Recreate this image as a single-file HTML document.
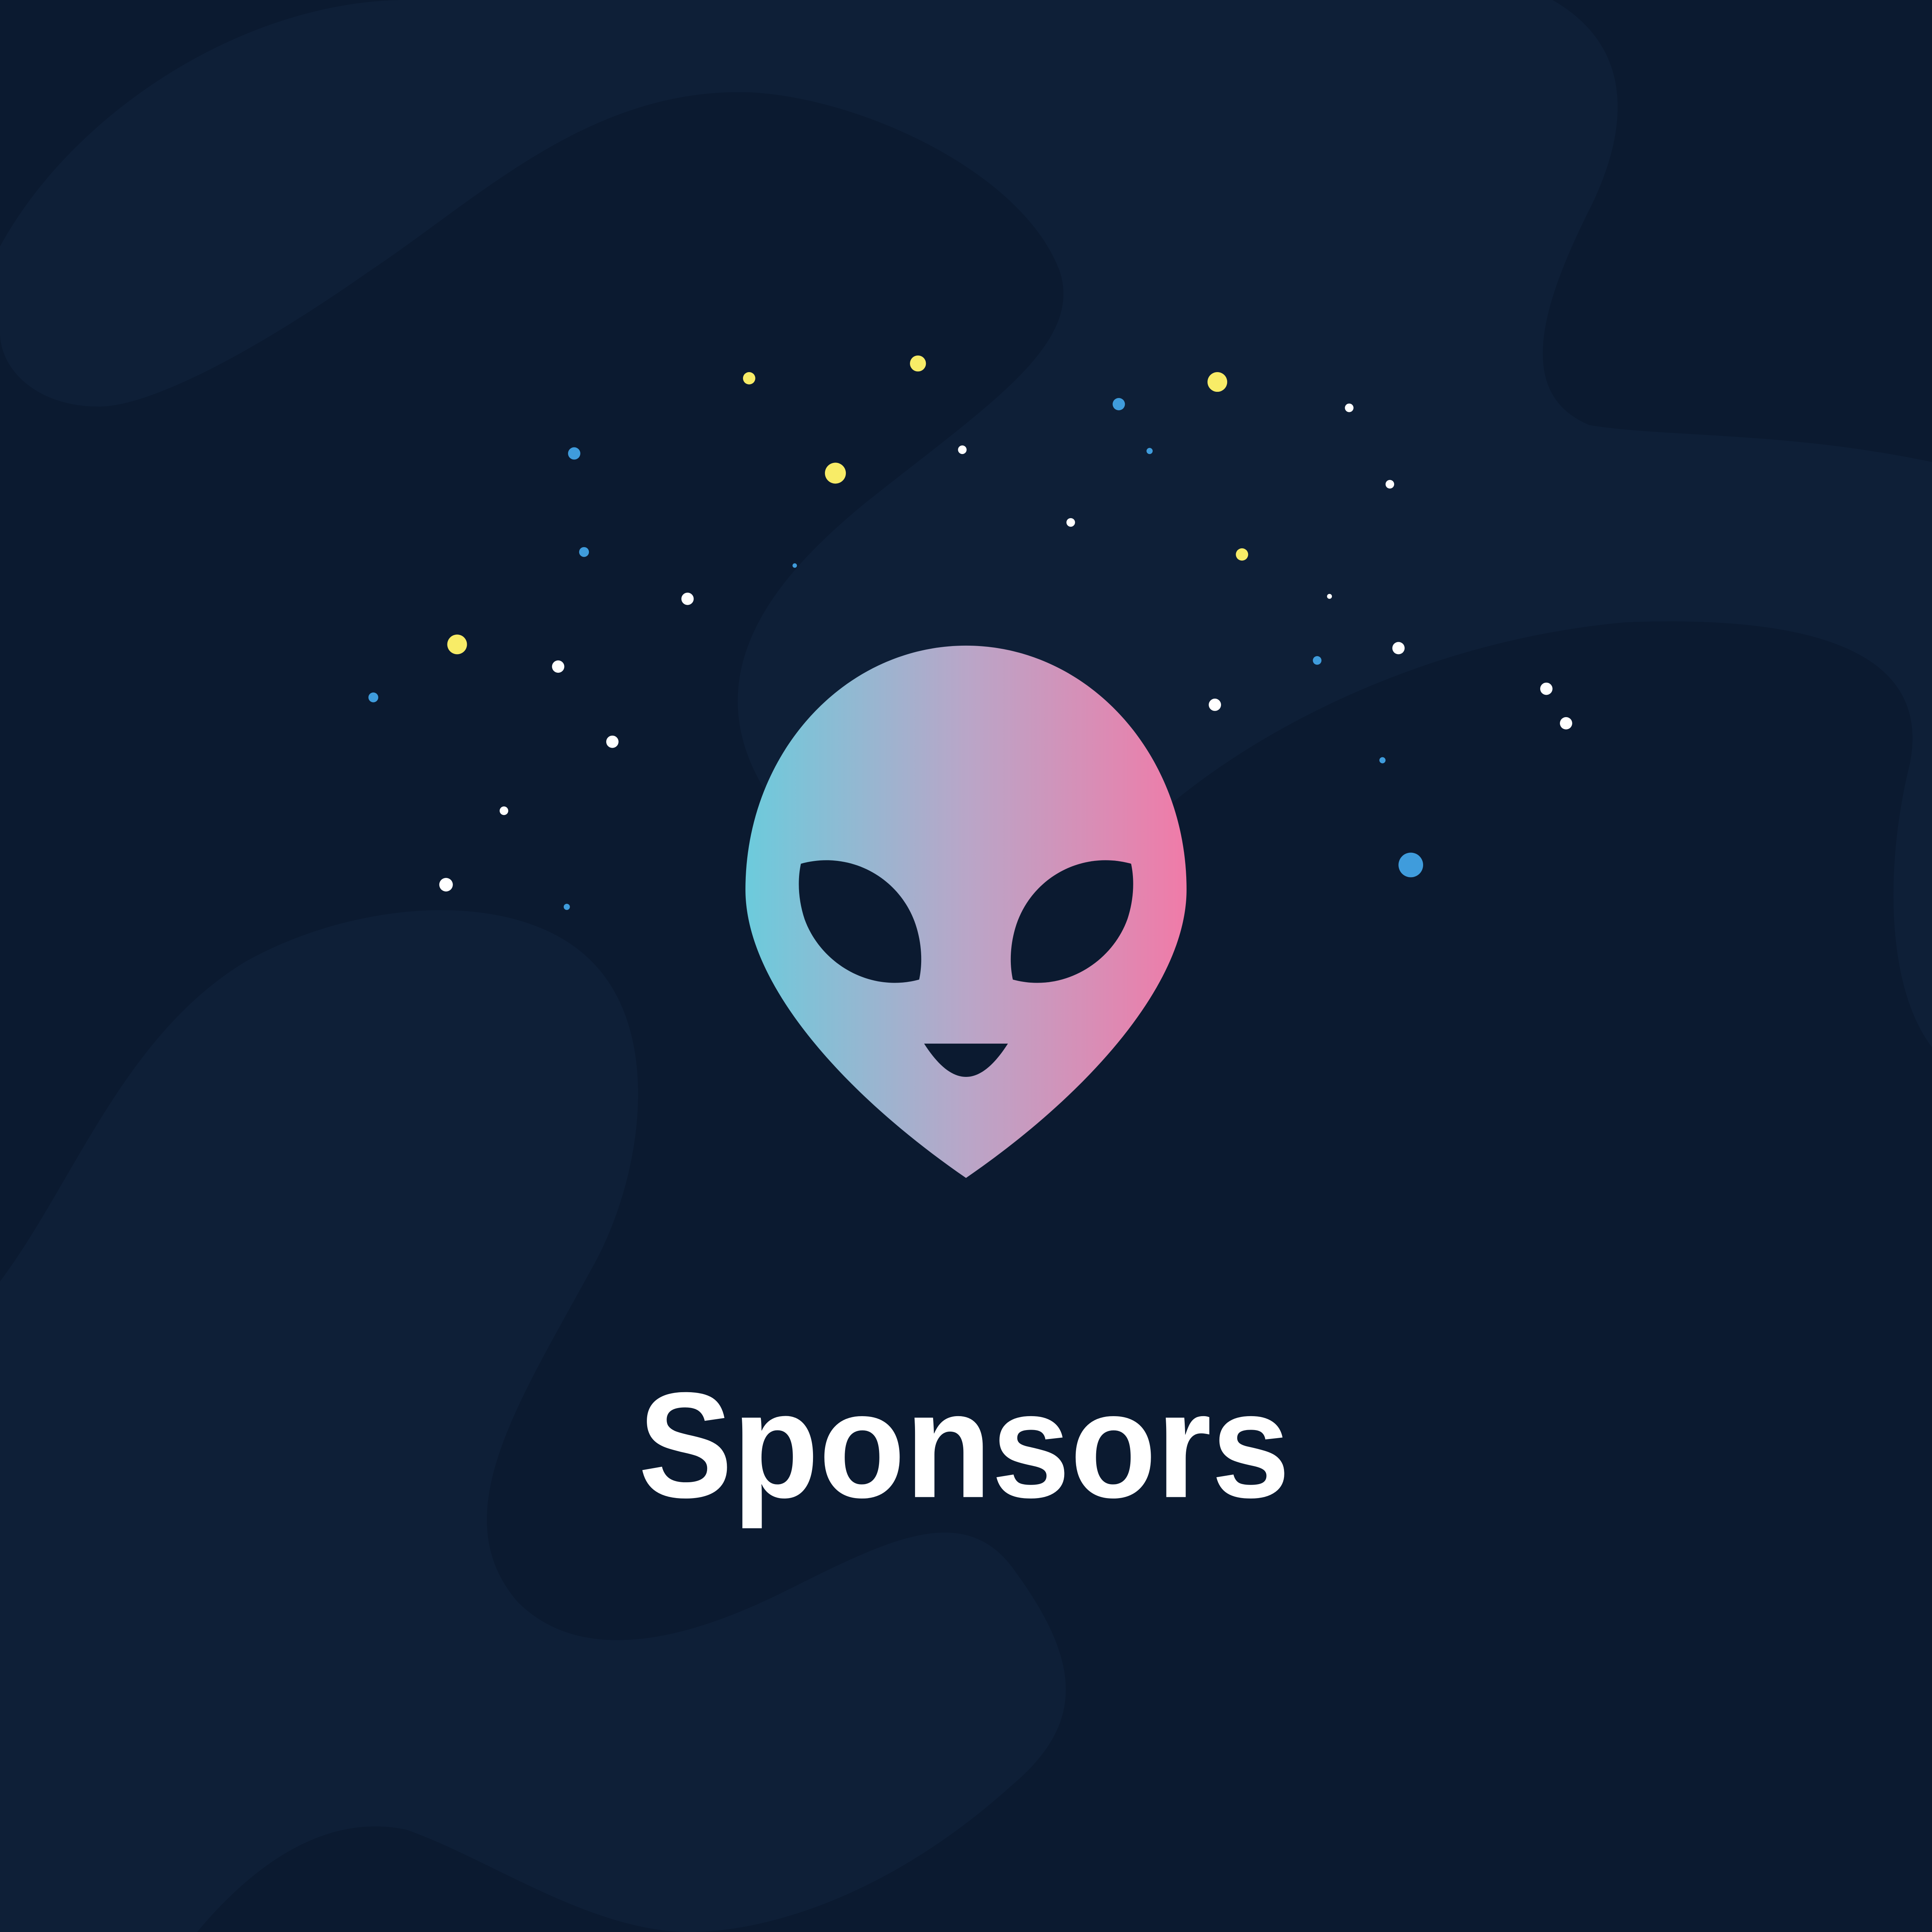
<!DOCTYPE html>
<html><head><meta charset="utf-8"><style>
html,body{margin:0;padding:0;background:#0b1a30;overflow:hidden;width:100%;height:100%;}
svg{display:block;position:fixed;left:0;top:0;width:100vw;height:100vh;}
</style></head><body>
<svg viewBox="0 0 1568 1568" preserveAspectRatio="none" xmlns="http://www.w3.org/2000/svg">
<defs>
<linearGradient id="g" x1="605" y1="0" x2="963" y2="0" gradientUnits="userSpaceOnUse">
<stop offset="0" stop-color="#6ccbdc"/><stop offset="0.5" stop-color="#b9a6c8"/><stop offset="1" stop-color="#f07ba8"/>
</linearGradient>
</defs>
<rect width="1568" height="1568" fill="#0b1a30"/>
<g fill="#0e1f37">
<path d="M0,200 C60,90 200,0 330,0 L1260,0 C1330,40 1320,110 1290,170 C1250,250 1230,320 1290,345 C1350,355 1450,350 1568,375 L1568,850 C1530,800 1530,700 1550,620 C1570,520 1450,500 1320,505 C1150,520 1000,600 920,680 C850,720 690,700 620,640 C560,540 640,460 700,410 C800,330 880,280 860,220 C830,140 700,80 610,75 C480,70 390,160 300,220 C200,290 120,330 80,330 C30,330 0,300 0,270 Z"/>
<path d="M0,1040 C60,960 100,840 200,780 C290,730 420,720 480,780 C540,840 520,960 480,1030 C420,1140 360,1230 420,1300 C480,1360 580,1320 640,1290 C720,1250 780,1220 820,1270 C880,1350 880,1400 820,1450 C720,1540 620,1568 560,1568 C480,1568 400,1510 330,1485 C260,1470 200,1520 160,1568 L0,1568 Z"/>
<path d="M560,0 C620,30 700,40 800,0 Z"/>
</g>
<g fill="#ffffff">
<circle cx="781" cy="365" r="3.5"/><circle cx="869" cy="424" r="3.5"/><circle cx="558" cy="486" r="5"/>
<circle cx="453" cy="541" r="5"/><circle cx="497" cy="602" r="5"/><circle cx="409" cy="658" r="3.5"/>
<circle cx="362" cy="718" r="5.5"/><circle cx="1095" cy="331" r="3.5"/><circle cx="1128" cy="393" r="3.5"/>
<circle cx="1079" cy="484" r="2"/><circle cx="1135" cy="526" r="5"/><circle cx="986" cy="572" r="5"/>
<circle cx="1255" cy="559" r="5"/><circle cx="1271" cy="587" r="5"/>
</g>
<g fill="#f8ec67">
<circle cx="608" cy="307" r="5"/><circle cx="745" cy="295" r="6.5"/><circle cx="678" cy="384" r="8.5"/>
<circle cx="988" cy="310" r="8"/><circle cx="1008" cy="450" r="5"/><circle cx="371" cy="523" r="8"/>
</g>
<g fill="#3f9cdc">
<circle cx="466" cy="368" r="5"/><circle cx="474" cy="448" r="4"/><circle cx="645" cy="459" r="1.8"/>
<circle cx="303" cy="566" r="4"/><circle cx="460" cy="736" r="2.5"/><circle cx="908" cy="328" r="5"/>
<circle cx="933" cy="366" r="2.5"/><circle cx="1069" cy="536" r="3.5"/><circle cx="1122" cy="617" r="2.5"/>
<circle cx="1145" cy="702" r="10"/>
</g>
<path fill="url(#g)" d="M784,524 C883,524 963,612 963,722 C963,800 880,890 784,956 C688,890 605,800 605,722 C605,612 685,524 784,524 Z"/>
<g fill="#0b1a30">
<path d="M650,701 C690,690 730,712 743,750 C748,765 749,781 746,795 C706,806 666,782 653,746 C648,731 647,715 650,701 Z"/>
<path d="M918,701 C878,690 838,712 825,750 C820,765 819,781 822,795 C862,806 902,782 915,746 C920,731 921,715 918,701 Z"/>
<path d="M750,847 L818,847 C795,883 773,883 750,847 Z"/>
</g>
<text x="518" y="1215" textLength="529" lengthAdjust="spacingAndGlyphs" font-family="Liberation Sans, sans-serif" font-weight="bold" font-size="122" fill="#ffffff">Sponsors</text>
</svg>
</body></html>
